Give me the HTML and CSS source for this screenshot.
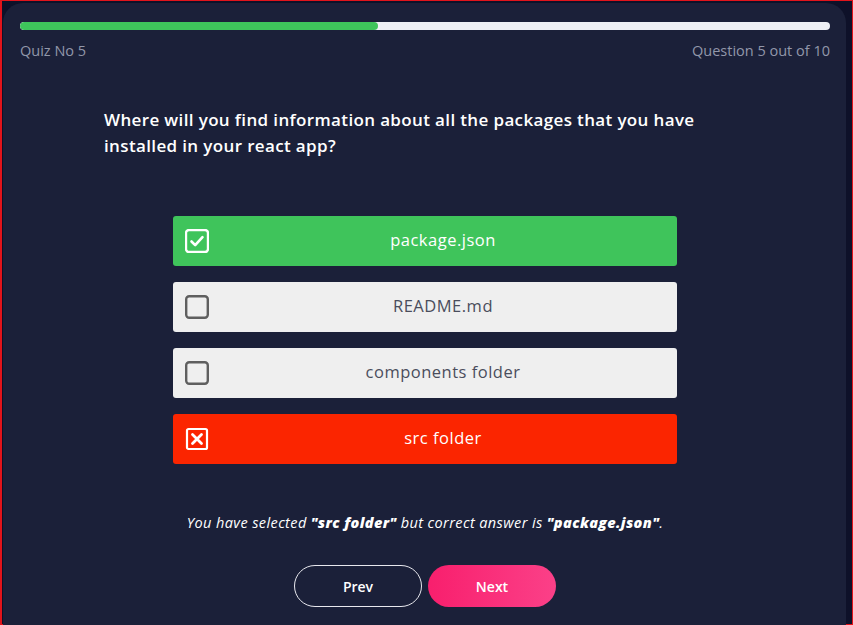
FILE: index.html
```html
<!DOCTYPE html>
<html>
<head>
<meta charset="utf-8">
<link rel="stylesheet" href="styles.css">
</head>
<body>
<div class="frame">
  <div class="card">
    <div class="progress"><div class="progress-fill" style="width:44.2%"></div></div>
    <div class="meta">
      <span>Quiz No 5</span>
      <span>Question 5 out of 10</span>
    </div>
    <div class="question">Where will you find information about all the packages that you have installed in your react app?</div>
    <div class="options">
      <div class="option correct">
        <span class="box"><svg viewBox="0 0 24 24" width="24" height="24"><rect x="1" y="1" width="22" height="22" rx="3" fill="none" stroke="#fff" stroke-width="2.4"/><path d="M6.5 12.5l3.7 3.7 7.3-8" fill="none" stroke="#fff" stroke-width="2.6" stroke-linecap="round" stroke-linejoin="round"/></svg></span>
        <span class="label">package.json</span>
      </div>
      <div class="option">
        <span class="box"><svg viewBox="0 0 24 24" width="24" height="24"><rect x="1.2" y="1.2" width="21.6" height="21.6" rx="3" fill="none" stroke="#5f5f5f" stroke-width="2.4"/></svg></span>
        <span class="label">README.md</span>
      </div>
      <div class="option">
        <span class="box"><svg viewBox="0 0 24 24" width="24" height="24"><rect x="1.2" y="1.2" width="21.6" height="21.6" rx="3" fill="none" stroke="#5f5f5f" stroke-width="2.4"/></svg></span>
        <span class="label">components folder</span>
      </div>
      <div class="option wrong">
        <span class="box"><svg viewBox="0 0 24 24" width="24" height="24"><rect x="2" y="2" width="20" height="20" rx="1.5" fill="none" stroke="#fff" stroke-width="2.2"/><path d="M7.5 7.5l9 9M16.5 7.5l-9 9" fill="none" stroke="#fff" stroke-width="2.8" stroke-linecap="round"/></svg></span>
        <span class="label">src folder</span>
      </div>
    </div>
    <p class="feedback">You have selected <b>"src folder"</b> but correct answer is <b>"package.json"</b>.</p>
    <div class="actions">
      <button class="btn prev">Prev</button>
      <button class="btn next">Next</button>
    </div>
  </div>
</div>
</body>
</html>
```
FILE: styles.css
```css
* { box-sizing: border-box; }
html, body { margin: 0; padding: 0; }
body {
  width: 853px;
  height: 625px;
  overflow: hidden;
  font-family: "Open Sans", "Noto Sans", sans-serif;
}
.frame {
  width: 853px;
  height: 625px;
  border: 1px solid #e1141b;
  border-left-width: 2px;
  background: #0e1129;
  padding: 2px 6px 0 1px;
}
.card {
  height: 640px;
  background: #1b2039;
  border-radius: 20px;
  padding: 19px 16px 0 17px;
}
.progress {
  height: 8px;
  border-radius: 4px;
  background: #eef0f5;
  overflow: hidden;
}
.progress-fill {
  height: 100%;
  background: #3ec55b;
  border-radius: 4px;
}
.meta {
  display: flex;
  justify-content: space-between;
  margin-top: 11px;
  font-size: 14.5px;
  line-height: 20px;
  color: #9297aa;
}
.question {
  width: 642px;
  margin: 46px auto 0;
  color: #ffffff;
  font-size: 17px;
  font-weight: 600;
  line-height: 26px;
  letter-spacing: 0.36px;
}
.options {
  width: 504px;
  margin: 57px auto 0;
  display: flex;
  flex-direction: column;
  gap: 16px;
}
.option {
  height: 50px;
  border-radius: 3px;
  background: #efefef;
  display: flex;
  align-items: center;
  padding-left: 12px;
  color: #4a4d5c;
  font-size: 16.5px;
  letter-spacing: 0.5px;
}
.option.correct { background: #3fc45b; color: #fff; }
.option.wrong { background: #fb2500; color: #fff; }
.box { width: 24px; height: 24px; display: flex; }
.label {
  flex: 1;
  text-align: center;
  margin-top: -4px;
}
.feedback {
  margin: 49px 0 0;
  text-align: center;
  color: #ffffff;
  font-size: 14.5px;
  font-style: italic;
  line-height: 20px;
  letter-spacing: 0.4px;
}
.feedback b { font-weight: 800; }
.actions {
  display: flex;
  justify-content: center;
  gap: 6px;
  margin-top: 32px;
}
.btn {
  width: 128px;
  height: 42px;
  border-radius: 21px;
  font-family: inherit;
  font-size: 14px;
  font-weight: 600;
  color: #fff;
  cursor: pointer;
}
.prev {
  background: transparent;
  border: 1px solid #e8e8ee;
}
.next {
  border: none;
  background: linear-gradient(90deg, #f81f6d, #fb4088);
}
```
